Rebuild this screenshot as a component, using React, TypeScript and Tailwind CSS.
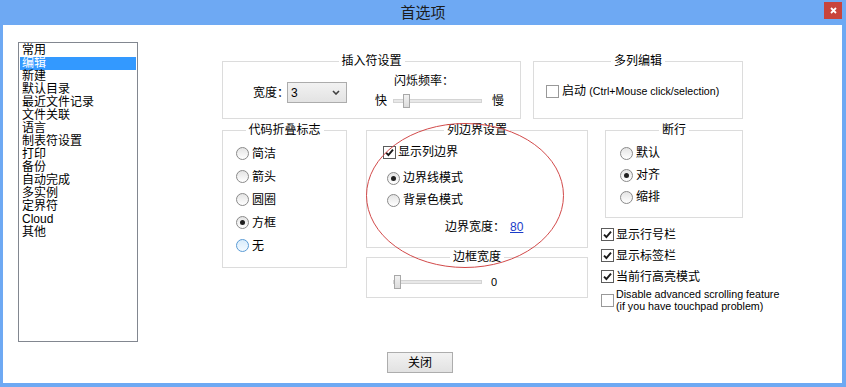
import React from 'react';

const items = ['常用', '编辑', '新建', '默认目录', '最近文件记录', '文件关联', '语言', '制表符设置', '打印', '备份', '自动完成', '多实例', '定界符', 'Cloud', '其他'];

function GroupBox({ title, className, children }: { title: string; className: string; children?: React.ReactNode }) {
  return (
    <div className={`relative border border-[#dcdcdc] ${className}`}>
      <span className="absolute -top-[9px] left-1/2 -translate-x-1/2 whitespace-nowrap bg-white px-[3px] text-[12px] leading-[16px]">
        {title}
      </span>
      {children}
    </div>
  );
}

function Radio({ label, checked, focus, h }: { label: string; checked?: boolean; focus?: boolean; h: string }) {
  return (
    <div className={`flex items-center ${h}`}>
      <span
        className={`flex h-[13px] w-[13px] items-center justify-center rounded-full border ${
          focus ? 'border-[#5a9bd5] bg-gradient-to-b from-[#d9ecfb] to-[#f4faff]' : 'border-[#8a8a8a] bg-gradient-to-b from-[#e4e4e4] to-white'
        }`}
      >
        {checked && <span className="h-[5px] w-[5px] rounded-full bg-[#202020]" />}
      </span>
      <span className="ml-[3px] text-[12px] leading-[16px]">{label}</span>
    </div>
  );
}

function Check({ checked }: { checked?: boolean }) {
  return (
    <span className={`flex h-[13px] w-[13px] shrink-0 items-center justify-center border bg-white ${checked ? 'border-[#5c5c5c]' : 'border-[#999999]'}`}>
      {checked && (
        <svg width="9" height="9" viewBox="0 0 9 9">
          <path d="M1 4.6 L3.4 7 L8 1.6" stroke="#1a1a1a" strokeWidth="1.9" fill="none" />
        </svg>
      )}
    </span>
  );
}

function Slider({ thumb }: { thumb: string }) {
  return (
    <div className="relative h-[14px] w-[89px]">
      <div className="absolute left-0 right-0 top-[5px] h-[4px] border border-[#d4d4d4] bg-[#e8e8e8]" />
      <div className={`absolute top-0 h-[14px] w-[7px] border border-[#a8a8a8] bg-gradient-to-b from-[#f2f2f2] to-[#dcdcdc] ${thumb}`} />
    </div>
  );
}

export default function App() {
  return (
    <div className="relative flex h-[387px] w-[846px] flex-col bg-[#6ea9f3] font-['Liberation_Sans','Noto_Sans_CJK_SC',sans-serif] text-black">
      {/* title bar */}
      <div className="relative flex h-[25px] items-center justify-center">
        <span className="text-[15px] leading-[18px] text-[#1c1c1c]">首选项</span>
        <div className="absolute right-[4px] top-[2px] flex h-[17px] w-[18px] items-center justify-center bg-[#c8443c]">
          <svg width="7" height="7" viewBox="0 0 7 7">
            <path d="M1 1 L6 6 M6 1 L1 6" stroke="white" strokeWidth="1.8" />
          </svg>
        </div>
      </div>

      <div className="mb-[4px] ml-[3px] mr-[4px] flex-1 bg-white">
        <div className="flex pl-[15px] pt-[17px]">
          {/* list */}
          <div className="h-[300px] w-[120px] border border-[#828790] bg-white pt-[1px]">
            {items.map((it, i) => (
              <div
                key={it}
                className={`mx-[1px] h-[13px] pl-[2px] text-[12px] leading-[13px] ${i === 1 ? 'bg-[#3399ff] text-white' : ''}`}
              >
                {it}
              </div>
            ))}
          </div>

          <div className="ml-[84px] mt-[19px]">
            {/* row 1 */}
            <div className="flex">
              <GroupBox title="插入符设置" className="flex h-[58px] w-[299px] items-start">
                <div className="ml-[30px] mt-[20px] flex items-center">
                  <span className="w-[34px] whitespace-nowrap text-[12px] leading-[16px]">宽度：</span>
                  <div className="flex h-[21px] w-[60px] items-center justify-between border border-[#acacac] bg-gradient-to-b from-[#f2f2f2] to-[#e3e3e3] pl-[3px] pr-[6px]">
                    <span className="text-[12px] leading-[14px]">3</span>
                    <svg width="8" height="5" viewBox="0 0 8 5">
                      <path d="M1 1 L4 4 L7 1" stroke="#404040" strokeWidth="1.6" fill="none" />
                    </svg>
                  </div>
                </div>
                <div className="ml-[28px] mt-[11px]">
                  <div className="ml-[19px] text-[12px] leading-[16px]">闪烁频率：</div>
                  <div className="mt-[4px] flex h-[16px] items-center">
                    <span className="w-[12px] text-[12px] leading-[16px]">快</span>
                    <div className="ml-[6px]">
                      <Slider thumb="left-[10px]" />
                    </div>
                    <span className="ml-[10px] text-[12px] leading-[16px]">慢</span>
                  </div>
                </div>
              </GroupBox>
              <GroupBox title="多列编辑" className="ml-[12px] h-[58px] w-[210px]">
                <div className="ml-[12px] mt-[21px] flex h-[16px] items-center">
                  <Check />
                  <span className="ml-[3px] whitespace-nowrap text-[12px] leading-[16px]">
                    启动 <span className="text-[10.6px]">(Ctrl+Mouse click/selection)</span>
                  </span>
                </div>
              </GroupBox>
            </div>

            {/* row 2 */}
            <div className="mt-[11px] flex items-start">
              <GroupBox title="代码折叠标志" className="h-[138px] w-[125px] pl-[13px] pt-[11px]">
                <Radio h="h-[23px]" label="简洁" />
                <Radio h="h-[23px]" label="箭头" />
                <Radio h="h-[23px]" label="圆圈" />
                <Radio h="h-[23px]" label="方框" checked />
                <Radio h="h-[23px]" label="无" focus />
              </GroupBox>

              <div className="ml-[19px] flex w-[222px] flex-col">
                <GroupBox title="列边界设置" className="h-[118px]">
                  <div className="ml-[16px] mt-[13px] flex h-[16px] items-center">
                    <Check checked />
                    <span className="ml-[2px] text-[12px] leading-[16px]">显示列边界</span>
                  </div>
                  <div className="ml-[20px] mt-[7px]">
                    <Radio h="h-[22px]" label="边界线模式" checked />
                    <Radio h="h-[22px]" label="背景色模式" />
                  </div>
                  <div className="ml-[78px] mt-[8px] flex text-[12px] leading-[16px]">
                    <span>边界宽度：</span>
                    <span className="ml-[5px] text-[#1a3cc8] underline">80</span>
                  </div>
                </GroupBox>
                <GroupBox title="边框宽度" className="mt-[9px] h-[41px]">
                  <div className="ml-[26px] mt-[16px] flex h-[16px] items-center">
                    <Slider thumb="left-[1px]" />
                    <span className="ml-[9px] text-[11px] leading-[16px]">0</span>
                  </div>
                </GroupBox>
              </div>

              <div className="ml-[17px] w-[138px]">
                <GroupBox title="断行" className="h-[88px] pl-[14px] pt-[11px]">
                  <Radio h="h-[22px]" label="默认" />
                  <Radio h="h-[22px]" label="对齐" checked />
                  <Radio h="h-[22px]" label="缩排" />
                </GroupBox>
                <div className="-ml-[4px] mt-[6px] w-[200px]">
                  {['显示行号栏', '显示标签栏', '当前行高亮模式'].map((t) => (
                    <div key={t} className="flex h-[21px] items-center">
                      <Check checked />
                      <span className="ml-[2px] text-[12px] leading-[16px]">{t}</span>
                    </div>
                  ))}
                  <div className="mt-[1px] flex items-center">
                    <Check />
                    <span className="ml-[2px] text-[10.7px] leading-[12px]">
                      Disable advanced scrolling feature
                      <br />
                      (if you have touchpad problem)
                    </span>
                  </div>
                </div>
              </div>
            </div>
          </div>
        </div>

        <div className="mt-[10px] flex justify-center pr-[5px]">
          <div className="flex h-[21px] w-[66px] items-center justify-center border border-[#adadad] bg-gradient-to-b from-[#f2f2f2] to-[#e2e2e2] text-[12px] leading-[16px]">
            关闭
          </div>
        </div>
      </div>

      {/* annotation ellipse */}
      <svg className="pointer-events-none absolute left-0 top-0" width="846" height="387">
        <ellipse cx="465" cy="195.5" rx="98.5" ry="72" fill="none" stroke="#d24a4a" strokeWidth="1" />
      </svg>
    </div>
  );
}
